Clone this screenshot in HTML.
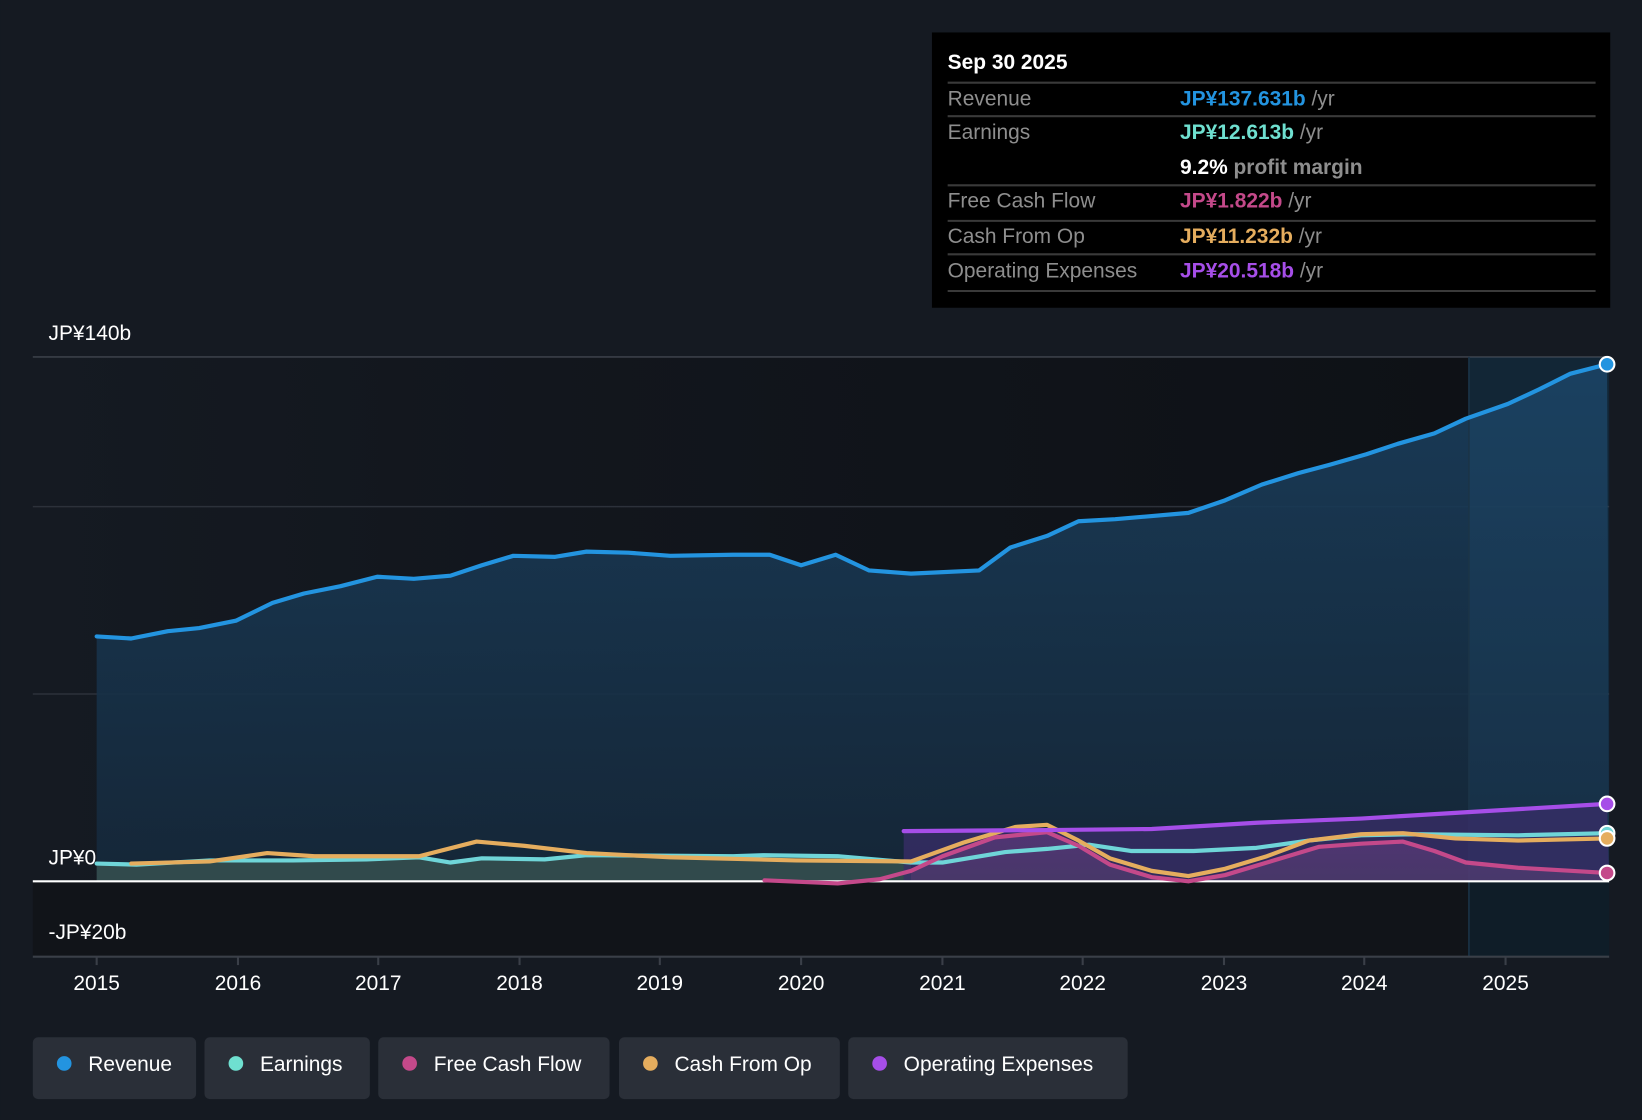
<!DOCTYPE html>
<html><head><meta charset="utf-8"><style>
html,body{margin:0;padding:0;background:#151a22;}
svg{display:block}
text{font-family:"Liberation Sans",sans-serif;}
</style></head><body>
<svg width="1642" height="1120" viewBox="0 0 1568 1070" xmlns="http://www.w3.org/2000/svg">
<defs>
<linearGradient id="rg" x1="0" y1="0" x2="0" y2="1"><stop offset="0" stop-color="#1a3f5e" stop-opacity="0.9"/><stop offset="1" stop-color="#15283a" stop-opacity="0.9"/></linearGradient>
<linearGradient id="pg" x1="0" y1="0" x2="0" y2="1"><stop offset="0" stop-color="#7a3f90" stop-opacity="0.45"/><stop offset="1" stop-color="#6a4a7a" stop-opacity="0.4"/></linearGradient>
<linearGradient id="bg" x1="0" y1="0" x2="1" y2="0"><stop offset="0" stop-color="#151a22"/><stop offset="0.35" stop-color="#12161d"/><stop offset="1" stop-color="#0e1116"/></linearGradient>
</defs>
<rect width="1568" height="1070" fill="#151a22"/>
<rect x="31" y="341" width="1372" height="573" fill="url(#bg)"/>
<rect x="1403" y="341" width="134" height="573" fill="#0f1d28"/>
<rect x="31" y="842" width="1372" height="72" fill="#111419"/>
<line x1="31" y1="341" x2="1537" y2="341" stroke="#3a3f48" stroke-width="1.5"/>
<line x1="31" y1="484" x2="1537" y2="484" stroke="#2c313a" stroke-width="1.5"/>
<line x1="31" y1="663" x2="1537" y2="663" stroke="#2c313a" stroke-width="1.5"/>
<!-- revenue area -->
<path d="M92,608 L125,610 160,603 190,600 225,593 260,576 290,567 325,560 360,551 395,553 430,550 460,540 490,531 530,532 560,527 600,528 640,531 700,530 735,530 765,540 798,530 830,545 870,548 935,545 965,523 1000,512 1030,498 1065,496 1100,493 1135,490 1170,478 1205,463 1240,452 1270,444 1305,434 1335,424 1370,414 1400,400 1440,386 1470,372 1500,357 1535,348 L1537,842 L92,842 Z" fill="url(#rg)"/>
<rect x="1403" y="341" width="134" height="501" fill="#2a6a9a" opacity="0.12"/>
<line x1="1403" y1="341" x2="1403" y2="914" stroke="#1b3447" stroke-width="1.5"/>
<path d="M92,825 L130,826 200,822 280,822 350,821 400,819 430,824 460,820 520,821 560,817 700,818 730,817 800,818 870,824 L870,842 L92,842Z" fill="#3d5a55" opacity="0.7"/>
<path d="M863,794 L1000,793 1100,792 1200,786 1300,782 1400,776 1535,768 L1537,842 L863,842Z" fill="#3a2d6a" opacity="0.75"/>
<path d="M870,832 L900,818 950,800 1000,795 1030,808 1060,826 1100,838 1135,842 1170,836 1210,824 1260,809 1300,806 1340,804 1370,813 1400,824 1450,829 1535,834 L1535,842 L870,842Z" fill="url(#pg)"/>
<line x1="31" y1="842" x2="1537" y2="842" stroke="#ffffff" stroke-width="2"/>
<line x1="31" y1="914" x2="1537" y2="914" stroke="#3a3f48" stroke-width="2"/>
<g stroke="#3a3f48" stroke-width="2">
<line x1="92" y1="914" x2="92" y2="922"/><line x1="227" y1="914" x2="227" y2="922"/><line x1="361" y1="914" x2="361" y2="922"/><line x1="496" y1="914" x2="496" y2="922"/><line x1="630" y1="914" x2="630" y2="922"/><line x1="765" y1="914" x2="765" y2="922"/><line x1="900" y1="914" x2="900" y2="922"/><line x1="1034" y1="914" x2="1034" y2="922"/><line x1="1169" y1="914" x2="1169" y2="922"/><line x1="1303" y1="914" x2="1303" y2="922"/><line x1="1438" y1="914" x2="1438" y2="922"/>
</g>
<g fill="none" stroke-width="4" stroke-linejoin="round" stroke-linecap="round">
<polyline stroke="#6fd5d8" points="92,825 130,826 200,822 280,822 350,821 400,819 430,824 460,820 520,821 560,817 700,818 730,817 800,818 870,824 900,824 960,814 1000,811 1040,807 1080,813 1140,813 1200,810 1250,803 1300,798 1350,797 1450,798 1535,796"/>
<polyline stroke="#e5ad5e" points="125,825 200,823 255,815 300,818 400,818 455,804 500,808 560,815 640,819 760,822 870,823 920,805 970,790 1000,788 1030,803 1060,820 1100,832 1135,837 1170,830 1210,818 1250,803 1300,797 1340,796 1390,801 1450,803 1535,801"/>
<polyline stroke="#c4498a" points="730,841 800,844 840,840 870,832 900,818 950,800 1000,795 1030,808 1060,826 1100,838 1135,842 1170,836 1210,824 1260,809 1300,806 1340,804 1370,813 1400,824 1450,829 1535,834"/>
<polyline stroke="#a64ee8" points="863,794 1000,793 1100,792 1200,786 1300,782 1400,776 1535,768"/>
<polyline stroke="#2394e0" points="92,608 125,610 160,603 190,600 225,593 260,576 290,567 325,560 360,551 395,553 430,550 460,540 490,531 530,532 560,527 600,528 640,531 700,530 735,530 765,540 798,530 830,545 870,548 935,545 965,523 1000,512 1030,498 1065,496 1100,493 1135,490 1170,478 1205,463 1240,452 1270,444 1305,434 1335,424 1370,414 1400,400 1440,386 1470,372 1500,357 1535,348"/>
</g>
<g stroke="#fff" stroke-width="2">
<circle cx="1535" cy="348" r="7" fill="#2394e0"/>
<circle cx="1535" cy="768" r="7" fill="#a64ee8"/>
<circle cx="1535" cy="796" r="7" fill="#6fd5d8"/>
<circle cx="1535" cy="801" r="7" fill="#e5ad5e"/>
<circle cx="1535" cy="834" r="7" fill="#c4498a"/>
</g>
<g fill="#fff" font-size="20">
<text x="46" y="325">JP¥140b</text>
<text x="46" y="826">JP¥0</text>
<text x="46" y="897">-JP¥20b</text>
</g>
<g fill="#fff" font-size="20" text-anchor="middle">
<text x="92" y="946">2015</text><text x="227" y="946">2016</text><text x="361" y="946">2017</text><text x="496" y="946">2018</text><text x="630" y="946">2019</text><text x="765" y="946">2020</text><text x="900" y="946">2021</text><text x="1034" y="946">2022</text><text x="1169" y="946">2023</text><text x="1303" y="946">2024</text><text x="1438" y="946">2025</text>
</g>
<!-- tooltip -->
<rect x="890" y="31" width="648" height="263" fill="#000"/>
<text x="905" y="66" fill="#fff" font-size="20" font-weight="bold">Sep 30 2025</text>
<g stroke="#3a3a3a" stroke-width="2">
<line x1="905" y1="79" x2="1524" y2="79"/><line x1="905" y1="111" x2="1524" y2="111"/><line x1="905" y1="177" x2="1524" y2="177"/><line x1="905" y1="211" x2="1524" y2="211"/><line x1="905" y1="243" x2="1524" y2="243"/><line x1="905" y1="278" x2="1524" y2="278"/>
</g>
<g font-size="20" fill="#8e8e8e">
<text x="905" y="101">Revenue</text>
<text x="905" y="133">Earnings</text>
<text x="905" y="198">Free Cash Flow</text>
<text x="905" y="232">Cash From Op</text>
<text x="905" y="265">Operating Expenses</text>
</g>
<g font-size="20" font-weight="bold">
<text x="1127" y="101"><tspan fill="#2394e0">JP¥137.631b</tspan><tspan fill="#8e8e8e" font-weight="normal"> /yr</tspan></text>
<text x="1127" y="133"><tspan fill="#6fe0d0">JP¥12.613b</tspan><tspan fill="#8e8e8e" font-weight="normal"> /yr</tspan></text>
<text x="1127" y="166"><tspan fill="#fff">9.2%</tspan><tspan fill="#8e8e8e"> profit margin</tspan></text>
<text x="1127" y="198"><tspan fill="#c4498a">JP¥1.822b</tspan><tspan fill="#8e8e8e" font-weight="normal"> /yr</tspan></text>
<text x="1127" y="232"><tspan fill="#e5ad5e">JP¥11.232b</tspan><tspan fill="#8e8e8e" font-weight="normal"> /yr</tspan></text>
<text x="1127" y="265"><tspan fill="#a64ee8">JP¥20.518b</tspan><tspan fill="#8e8e8e" font-weight="normal"> /yr</tspan></text>
</g>
<!-- legend -->
<g fill="#2a2f38">
<rect x="31" y="991" width="156" height="59" rx="5"/>
<rect x="195" y="991" width="158" height="59" rx="5"/>
<rect x="361" y="991" width="221" height="59" rx="5"/>
<rect x="591" y="991" width="211" height="59" rx="5"/>
<rect x="810" y="991" width="267" height="59" rx="5"/>
</g>
<circle cx="61" cy="1016" r="7" fill="#2394e0"/>
<circle cx="225" cy="1016" r="7" fill="#6fe0d0"/>
<circle cx="391" cy="1016" r="7" fill="#c4498a"/>
<circle cx="621" cy="1016" r="7" fill="#e5ad5e"/>
<circle cx="840" cy="1016" r="7" fill="#a64ee8"/>
<g fill="#fff" font-size="20">
<text x="84" y="1023">Revenue</text>
<text x="248" y="1023">Earnings</text>
<text x="414" y="1023">Free Cash Flow</text>
<text x="644" y="1023">Cash From Op</text>
<text x="863" y="1023">Operating Expenses</text>
</g>
</svg>
</body></html>
